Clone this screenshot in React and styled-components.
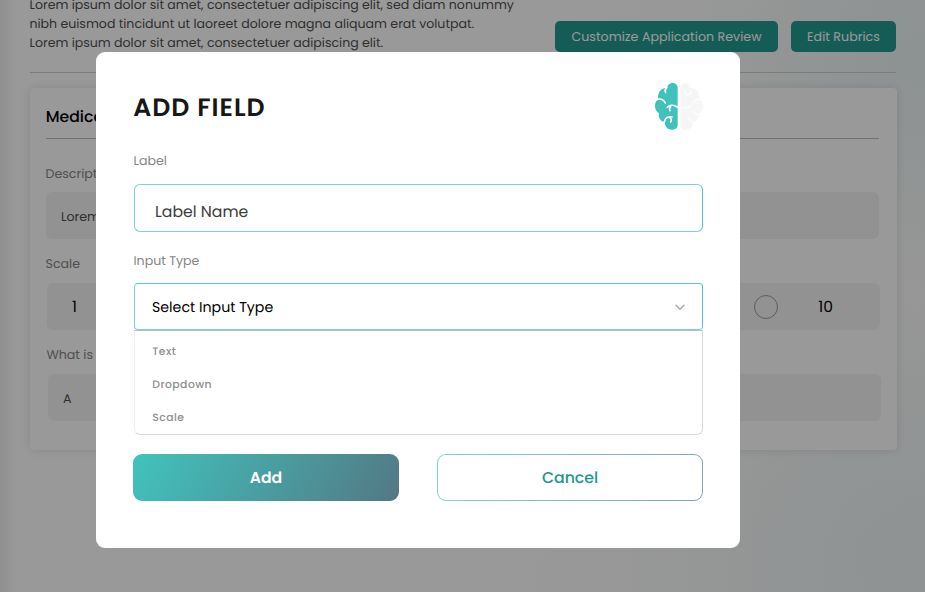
import React from "react";
import styled, { createGlobalStyle } from "styled-components";

const GlobalStyle = createGlobalStyle`
  *, *::before, *::after { box-sizing: border-box; }
  body {
    margin: 0;
    overflow: hidden;
    font-family: Poppins, "Open Sans", sans-serif;
    color: #000;
    text-rendering: geometricPrecision;
  }
  button, input { font-family: inherit; text-rendering: inherit; }
`;

const Page = styled.main`
  height: 592px;
  padding: 0 28px 0 30px;
  overflow: hidden;
  background:
    linear-gradient(90deg, rgba(0, 0, 0, 0.07), rgba(0, 0, 0, 0) 14px),
    radial-gradient(circle 240px at 915px 60px, rgba(230, 241, 242, 0.75), transparent),
    radial-gradient(circle 290px at 905px 560px, rgba(236, 244, 246, 0.85), transparent),
    linear-gradient(100deg, #fff 55%, #fbfbfa 100%);
`;

const PageHeader = styled.header`
  display: flex;
  justify-content: space-between;
  height: 73px;
  margin-right: 1px;
  border-bottom: 1px solid #cdd1d1;
`;

const Intro = styled.p`
  margin: -4px 0 0 -0.5px;
  font-size: 12.55px;
  line-height: 19px;
  color: #4f4f4f;
  white-space: nowrap;
`;

const Actions = styled.div`
  display: flex;
  gap: 13px;
  padding-top: 21px;
`;

const ActionButton = styled.button`
  width: ${(p) => p.$width}px;
  height: 31px;
  padding: 3px 0 0;
  border: 0;
  border-radius: 5px;
  background: #26998f;
  color: #fff;
  font-size: 12.6px;
  letter-spacing: 0.05px;
  white-space: nowrap;
`;

const Card = styled.section`
  height: 362px;
  margin-top: 15px;
  padding: 0 16px;
  border-radius: 4px;
  background: #fff;
  box-shadow: 0 0 10px rgba(0, 0, 0, 0.12);
`;

const CardTitle = styled.h2`
  height: 51px;
  margin: 0 2px 0 -0.3px;
  padding-top: 20px;
  border-bottom: 1px solid #bcbcbc;
  font-size: 15.7px;
  font-weight: 500;
  line-height: 20px;
`;

const CardLabel = styled.div`
  height: ${(p) => p.$height}px;
  margin-left: -0.5px;
  padding: ${(p) => p.$top}px 0 0 ${(p) => p.$indent || 0}px;
  font-size: 12.6px;
  line-height: 18px;
  color: #868686;
`;

const CardField = styled.div`
  display: flex;
  align-items: center;
  height: 47px;
  width: 833px;
  margin-left: ${(p) => p.$indent || 0}px;
  padding: 4px 15px 0;
  border-radius: 6px;
  background: #f4f4f4;
  font-size: 12.6px;
  color: #4f4f4f;
`;

const ScaleRow = styled(CardField)`
  justify-content: space-between;
  padding: 1px 47px 0 25px;
  font-size: 15.5px;
  color: #000;
`;

const ScaleNumber = styled.span`
  padding-top: 1px;
`;

const ScaleEnd = styled.div`
  display: flex;
  align-items: center;
  gap: 40px;
`;

const Radio = styled.span`
  width: 24px;
  height: 24px;
  border: 1px solid #9a9a9a;
  border-radius: 50%;
`;

const Overlay = styled.div`
  position: fixed;
  inset: 0;
  padding: 52px 0 0 96px;
  background: rgba(0, 0, 0, 0.4);
`;

const Modal = styled.form`
  width: 644.4px;
  height: 496px;
  padding: 31px 37px 0 38px;
  border-radius: 9px;
  background: #fff;
`;

const ModalHeader = styled.div`
  display: flex;
  align-items: center;
  justify-content: space-between;
  width: 569px;
  height: 47px;
`;

const Title = styled.h1`
  margin: 3px 0 0 -0.8px;
  font-size: 25.2px;
  font-weight: 600;
  line-height: 36px;
  letter-spacing: 0.98px;
  color: #171717;
`;

const FieldLabel = styled.label`
  display: block;
  height: ${(p) => p.$height}px;
  margin-left: -0.5px;
  padding-top: ${(p) => p.$top}px;
  font-size: 12.6px;
  line-height: 18px;
  color: #868686;
`;

const TextInput = styled.input`
  display: block;
  width: 569px;
  height: 48px;
  padding: 8px 20px 0;
  border: 1px solid;
  border-color: #79d3ce #4fc6c0 #79d3ce #79d3ce;
  border-radius: 6px;
  outline: 0;
  font-size: 15.7px;
  color: #3d3d3d;
  &::placeholder { color: #3d3d3d; opacity: 1; }
`;

const Select = styled.div`
  display: flex;
  align-items: center;
  justify-content: space-between;
  width: 569px;
  height: 47px;
  padding: 1px 17px 0;
  border: 1px solid;
  border-color: #5acac4 #4fc6c0 #79d3ce #79d3ce;
  border-radius: 4px;
  font-size: 14.2px;
`;

const Options = styled.ul`
  width: 569px;
  height: 105px;
  margin: 0;
  padding: 4px 17.3px 0;
  list-style: none;
  border: 1px solid #dadada;
  border-top-color: #bdbdbd;
  border-left-color: #efefef;
  border-radius: 0 0 6px 6px;
`;

const Option = styled.li`
  height: 33px;
  font-size: 10.8px;
  font-weight: 500;
  line-height: 33px;
  letter-spacing: 0.45px;
  color: #8f8f8f;
`;

const Buttons = styled.div`
  display: flex;
  gap: 38px;
  margin: 19px 0 0 -1px;
`;

const ModalButton = styled.button`
  width: 266px;
  height: 47px;
  padding: 2px 0 0;
  border-radius: 9px;
  font-size: 15.7px;
`;

const AddButton = styled(ModalButton)`
  border: 0;
  background: linear-gradient(118deg, #41c3bd, #537884);
  color: #fff;
  font-weight: 600;
`;

const CancelButton = styled(ModalButton)`
  border: 1px solid transparent;
  background:
    linear-gradient(#fff, #fff) padding-box,
    linear-gradient(110deg, #7fd5d0, #87a2ab) border-box;
  color: #24978d;
  font-weight: 500;
`;

function BrainLogo() {
  return (
    <svg width="48" height="47" viewBox="45 39 144 141" fill="none">
      <path
        fill="#41c1bb"
        d="M113 52C112 44 106 39 98 39C88 39 82 46 82 54C68 53 58 60 55 74C53 80 54 84 55 88C48 92 45 99 45 108C45 118 50 126 57 130C54 143 61 154 74 156C74 169 82 179 95 179C106 179 113 173 113 164Z"
      />
      <path
        fill="#f6f6f6"
        d="M121 52C122 44 128 40 136 40C147 40 153 46 154 54C166 55 175 62 177 73C178 79 178 83 176 88C184 92 189 99 189 109C189 119 185 126 178 130C179 144 172 154 159 156C159 170 151 179 138 179C128 179 121 173 121 164Z"
      />
      <g stroke="#fff" strokeWidth="4.8" strokeLinecap="round">
        <path d="M80 53C74 59 75 65 77 68" />
        <path d="M50 89C62 84 72 89 76 99" />
        <path d="M82 112C88 105 98 104 105 108C110 111 115 113 121 111M92 109C88 113 88 117 90 122" />
        <path d="M73 156C75 144 84 138 96 141M89 143C95 146 95 151 92 156" />
      </g>
      <g stroke="#fff" strokeWidth="3.6" strokeLinecap="round">
        <path d="M136 63C137 69 138 73 139 78C145 75 153 73 154 64" />
        <path d="M184 89C171 85 162 91 160 99" />
        <path d="M119 111C130 116 144 114 154 108" />
        <path d="M182 132C174 136 164 133 160 125M157 156C155 147 149 144 143 147" />
      </g>
    </svg>
  );
}

function Chevron() {
  return (
    <svg width="10" height="7" viewBox="0 0 10 7" fill="none">
      <path d="M1 1.2L5 5.2L9 1.2" stroke="#aaa" strokeWidth="1.5" strokeLinecap="round" />
    </svg>
  );
}

export default function App() {
  return (
    <>
      <GlobalStyle />
      <Page>
        <PageHeader>
          <Intro>
            Lorem ipsum dolor sit amet, consectetuer adipiscing elit, sed diam nonummy
            <br />
            nibh euismod tincidunt ut laoreet dolore magna aliquam erat volutpat.
            <br />
            Lorem ipsum dolor sit amet, consectetuer adipiscing elit.
          </Intro>
          <Actions>
            <ActionButton $width={223}>Customize Application Review</ActionButton>
            <ActionButton $width={105}>Edit Rubrics</ActionButton>
          </Actions>
        </PageHeader>
        <Card>
          <CardTitle>Medical</CardTitle>
          <CardLabel $height={53} $top={27}>Description</CardLabel>
          <CardField>Lorem</CardField>
          <CardLabel $height={44} $top={17}>Scale</CardLabel>
          <ScaleRow $indent={1}>
            <ScaleNumber>1</ScaleNumber>
            <ScaleEnd>
              <Radio />
              <ScaleNumber>10</ScaleNumber>
            </ScaleEnd>
          </ScaleRow>
          <CardLabel $height={44} $top={17} $indent={1}>What is</CardLabel>
          <CardField $indent={2}>A</CardField>
        </Card>
      </Page>
      <Overlay>
        <Modal onSubmit={(e) => e.preventDefault()}>
          <ModalHeader>
            <Title>ADD FIELD</Title>
            <BrainLogo />
          </ModalHeader>
          <FieldLabel $height={54} $top={23}>Label</FieldLabel>
          <TextInput placeholder="Label Name" />
          <FieldLabel $height={51} $top={21}>Input Type</FieldLabel>
          <Select>
            <span>Select Input Type</span>
            <Chevron />
          </Select>
          <Options>
            <Option>Text</Option>
            <Option>Dropdown</Option>
            <Option>Scale</Option>
          </Options>
          <Buttons>
            <AddButton type="submit">Add</AddButton>
            <CancelButton type="button">Cancel</CancelButton>
          </Buttons>
        </Modal>
      </Overlay>
    </>
  );
}
